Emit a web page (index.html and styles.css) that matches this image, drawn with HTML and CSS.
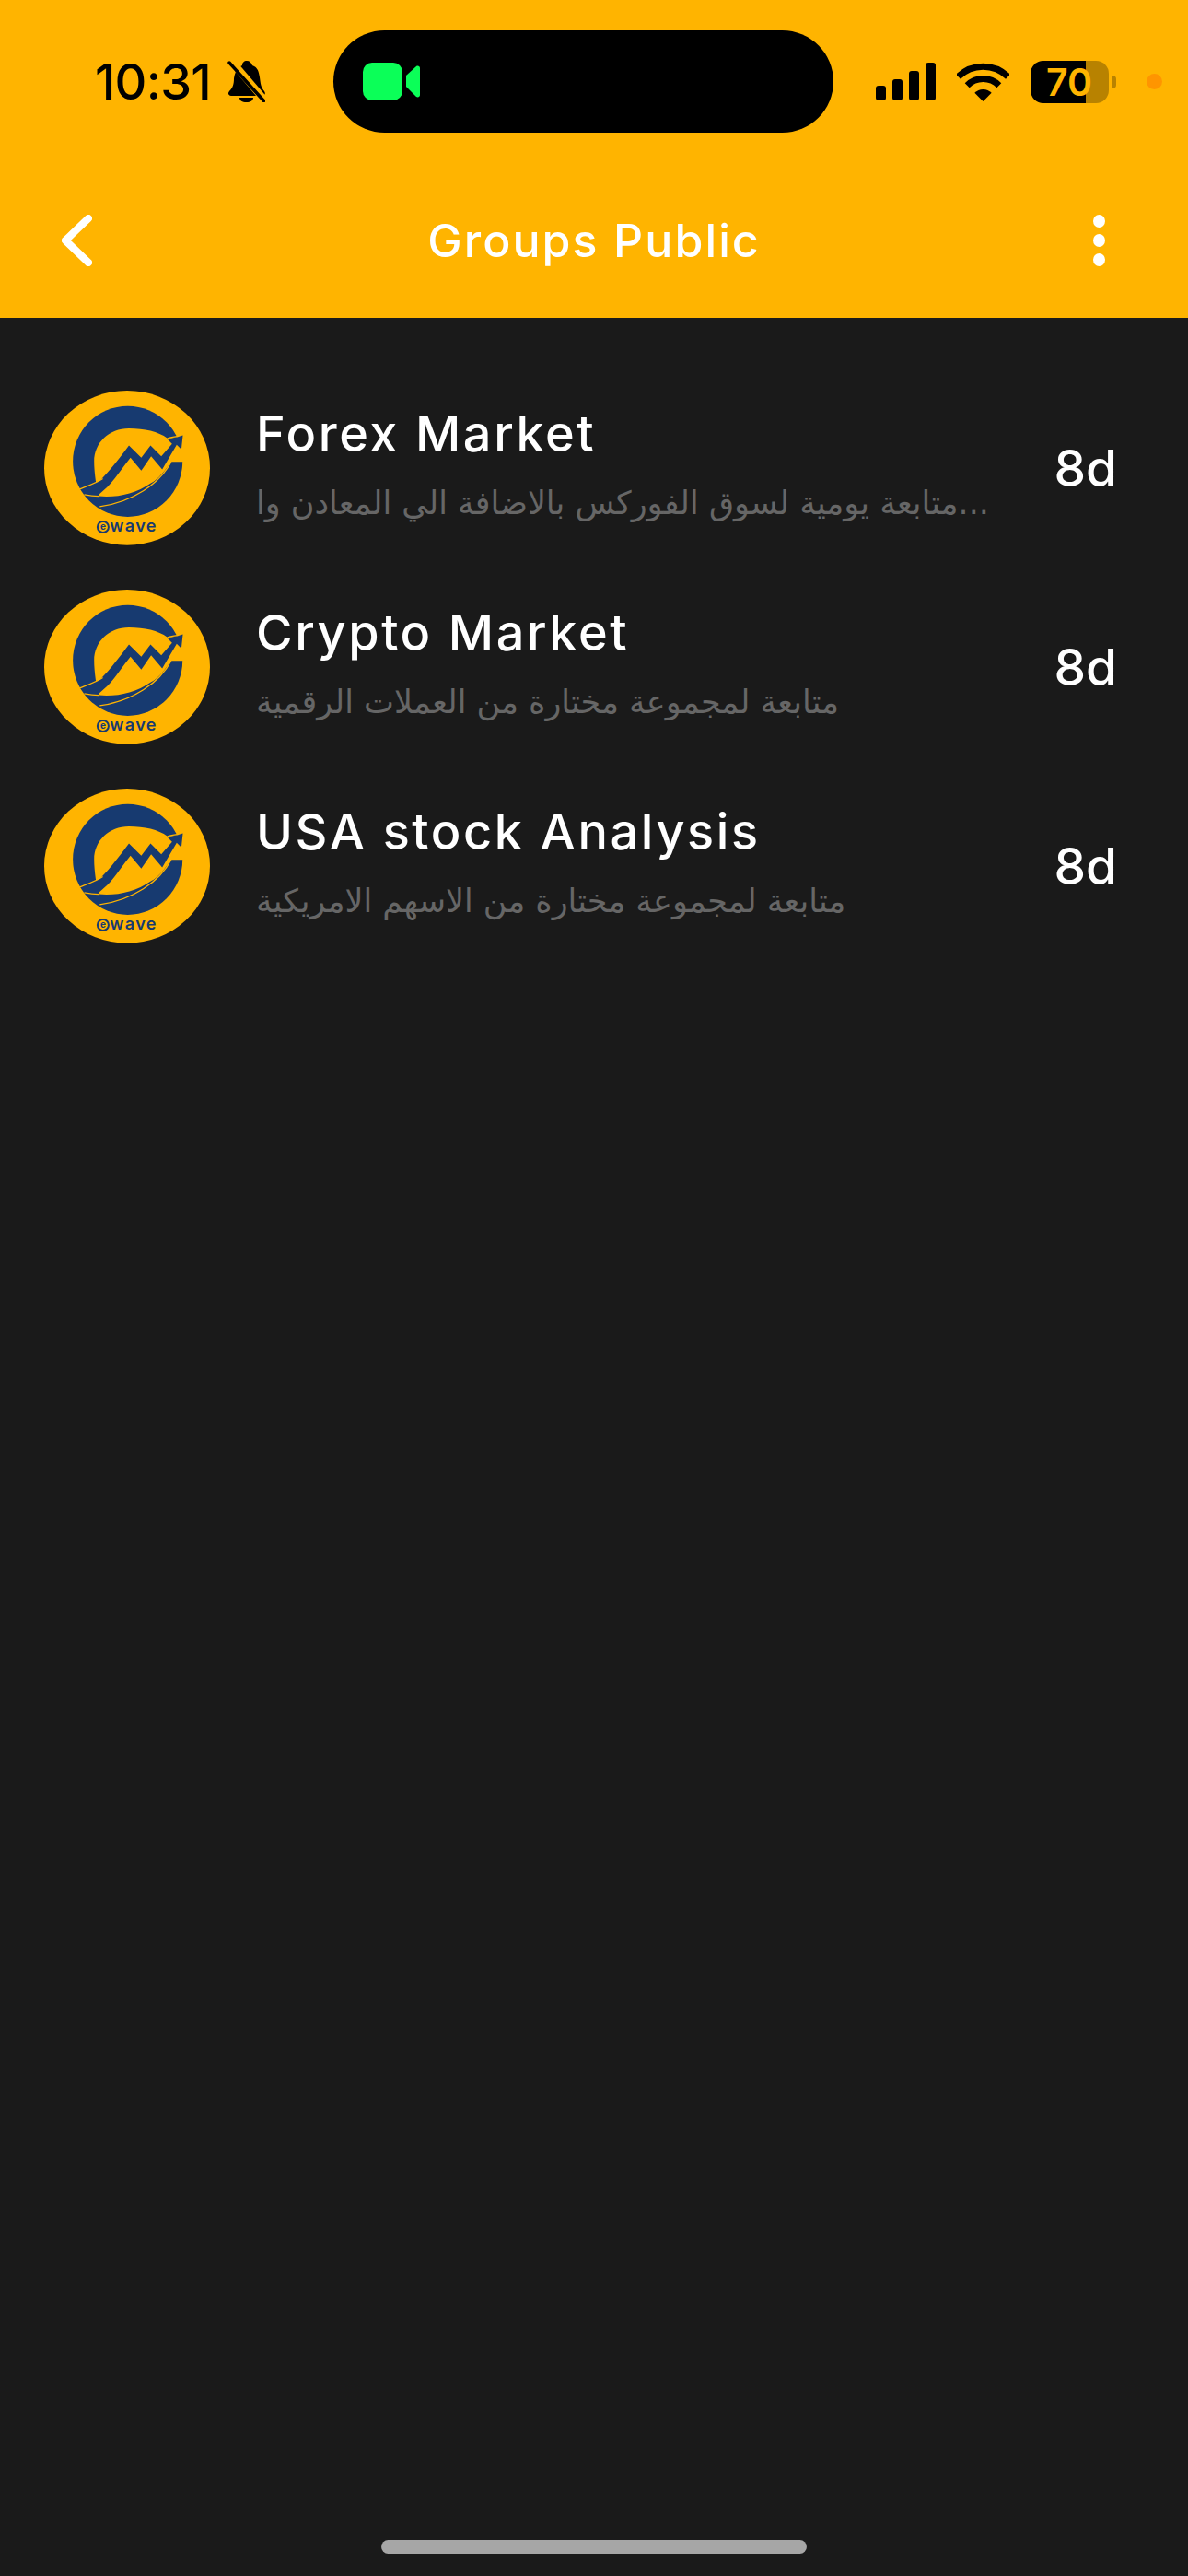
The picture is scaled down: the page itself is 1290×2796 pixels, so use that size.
FILE: index.html
```html
<!DOCTYPE html>
<html>
  <head>
    <meta name="viewport" content="width=device-width, initial-scale=1" />
    <link rel="stylesheet" href="styles.css">
  </head>
  <body>
    <!-- shared logo mark, used by every row -->
    <svg class="defs" width="0" height="0">
      <defs>
        <g id="logo">
          <ellipse cx="324" cy="293" rx="269" ry="251" fill="#ffb400" />
          <ellipse cx="326" cy="272" rx="178" ry="180" fill="#173a70" />
          <!-- hole of the C, opened towards the right -->
          <path fill="#ffb400" d="M217 272C217 212 265 165 330 165 380 165 425 175 455 197L510 190 510 273H467C440 310 425 330 402 342 350 378 290 390 232 385 225 360 217 310 217 272Z" />
          <!-- rising arrow -->
          <path fill="#173a70" d="M172 362C200 350 225 342 240 330 270 300 300 260 330 220L370 260 400 220 435 255 470 215 455 200C470 195 490 192 505 187L500 233 485 218 438 298 402 255 370 302 335 260C310 290 285 330 260 355L230 382C215 382 200 382 190 380Z" />
          <path fill="none" stroke="#ffb400" stroke-width="4" d="M170 362C195 352 225 342 245 328M185 380C200 383 215 385 232 385M235 419C340 405 430 345 467 273M455 197C465 193 480 192 492 190" />
        </g>
      </defs>
    </svg>

    <div class="page">
      <div class="topbar">
        <div class="status">
          <div class="status-left">
            <span class="time">10:31</span>
            <svg class="bell" viewBox="0 0 41 45">
              <path d="M21 0c3 0 5 2 6 5 6 2 7 7 8 13 1 7 1 10 5 15 2 3 0 5-2 5H4c-3 0-4-3-2-5 4-4 5-8 5-14 1-7 4-12 9-14 0-3 2-5 5-5z" />
              <path d="M13 40h15c0 3-3 5-7.500 5S13 43 13 40z" />
              <path class="bell-gap" d="M4 0 44 47" />
              <path class="bell-slash" d="M2 2 39.500 43.500" />
            </svg>
          </div>
          <div class="island">
            <svg class="camera" viewBox="0 0 62 41">
              <rect width="43" height="41" rx="10" />
              <path d="M47 14 58 4c2-1 4 0 4 2v29c0 2-2 3-4 2L47 26z" />
            </svg>
          </div>
          <div class="status-right">
            <div class="signal">
              <span class="bar bar1"></span>
              <span class="bar bar2"></span>
              <span class="bar bar3"></span>
              <span class="bar bar4"></span>
            </div>
            <svg class="wifi" viewBox="0 0 57 42">
              <path d="M1.500 15.200A38.500 38.500 0 0 1 55.500 15.200" />
              <path d="M11.200 24.700A24.500 24.500 0 0 1 45.800 24.700" />
              <path class="wifi-fan" d="M28.500 42 19.300 32.800A13 13 0 0 1 37.700 32.800Z" />
            </svg>
            <div class="battery">
              <div class="battery-body">70</div>
              <div class="battery-cap"></div>
            </div>
            <div class="mic-dot"></div>
          </div>
        </div>

        <div class="nav">
          <svg class="back" viewBox="0 0 33 56">
            <path d="M29 4 4 28 29 52" />
          </svg>
          <div class="nav-title">Groups Public</div>
          <div class="more">
            <span></span>
            <span></span>
            <span></span>
          </div>
        </div>
      </div>

      <div class="list">
        <div class="row">
          <svg class="avatar" viewBox="55 42 538 503" preserveAspectRatio="none">
            <use href="#logo" />
            <circle class="logo-ring" cx="246" cy="485" r="18" />
            <text class="logo-e" x="246" y="495">e</text>
            <text class="logo-text" x="268" y="500">wave</text>
          </svg>
          <div class="info">
            <div class="name">Forex Market</div>
            <div class="desc">متابعة يومية لسوق الفوركس بالاضافة الي المعادن وا...</div>
          </div>
          <div class="age">8d</div>
        </div>
        <div class="row">
          <svg class="avatar" viewBox="55 42 538 503" preserveAspectRatio="none">
            <use href="#logo" />
            <circle class="logo-ring" cx="246" cy="485" r="18" />
            <text class="logo-e" x="246" y="495">e</text>
            <text class="logo-text" x="268" y="500">wave</text>
          </svg>
          <div class="info">
            <div class="name">Crypto Market</div>
            <div class="desc">متابعة لمجموعة مختارة من العملات الرقمية</div>
          </div>
          <div class="age">8d</div>
        </div>
        <div class="row">
          <svg class="avatar" viewBox="55 42 538 503" preserveAspectRatio="none">
            <use href="#logo" />
            <circle class="logo-ring" cx="246" cy="485" r="18" />
            <text class="logo-e" x="246" y="495">e</text>
            <text class="logo-text" x="268" y="500">wave</text>
          </svg>
          <div class="info">
            <div class="name">USA stock Analysis</div>
            <div class="desc">متابعة لمجموعة مختارة من الاسهم الامريكية</div>
          </div>
          <div class="age">8d</div>
        </div>
      </div>

      <div class="home-bar"></div>
    </div>
  </body>
</html>
```

FILE: styles.css
```css
body {
  margin: 0;
  background: #1a1a1a;
  font-family: "Inter", "DejaVu Sans", sans-serif;
}

.defs {
  display: block;
}

.page {
  height: 2796px;
  display: flex;
  flex-direction: column;
  overflow: hidden;
}

.topbar {
  background: #ffb400;
  height: 345px;
}

/* status bar */

.status {
  height: 111px;
  padding-top: 33px;
  display: flex;
  align-items: center;
}

.status-left {
  flex: none;
  width: 362px;
  padding-left: 103px;
  box-sizing: border-box;
  display: flex;
  align-items: center;
  gap: 18px;
}

.time {
  font-size: 54px;
  font-weight: 500;
  letter-spacing: -0.800px;
  line-height: 60px;
  color: #000;
}

.bell {
  width: 41px;
  height: 45px;
  flex: none;
  fill: #000;
}

.bell-gap {
  fill: none;
  stroke: #ffb400;
  stroke-width: 8;
}

.bell-slash {
  fill: none;
  stroke: #000;
  stroke-width: 3.5;
  stroke-linecap: round;
}

.island {
  flex: none;
  width: 543px;
  height: 111px;
  border-radius: 56px;
  background: #000;
  display: flex;
  align-items: center;
  padding-left: 32px;
  box-sizing: border-box;
}

.camera {
  width: 62px;
  height: 41px;
  fill: #0bff58;
}

.status-right {
  display: flex;
  align-items: center;
  margin-left: 46px;
}

.signal {
  display: flex;
  align-items: flex-end;
  gap: 7px;
  height: 41px;
}

.bar {
  width: 11px;
  background: #000;
  border-radius: 3px;
}

.bar1 {
  height: 16px;
}

.bar2 {
  height: 23px;
}

.bar3 {
  height: 32px;
}

.bar4 {
  height: 41px;
}

.wifi {
  width: 57px;
  height: 42px;
  margin-left: 23px;
  fill: none;
  stroke: #000;
  stroke-width: 7;
}

.wifi-fan {
  fill: #000;
  stroke: none;
}

.battery {
  display: flex;
  align-items: center;
  gap: 3px;
  margin-left: 23px;
}

.battery-body {
  width: 85px;
  height: 46px;
  box-sizing: border-box;
  padding-left: 17px;
  border-radius: 14px;
  background: linear-gradient(90deg, #000 60px, #b88200 60px);
  color: #ffb400;
  font-size: 41px;
  font-weight: 600;
  line-height: 46px;
}

.battery-cap {
  width: 5px;
  height: 14px;
  border-radius: 0 4px 4px 0;
  background: #b88200;
}

.mic-dot {
  width: 17px;
  height: 17px;
  border-radius: 50%;
  background: #ff9500;
  margin-left: 33px;
}

/* nav bar */

.nav {
  height: 168px;
  margin-top: 33px;
  padding: 0 67px;
  display: grid;
  grid-template-columns: 1fr auto 1fr;
  align-items: center;
}

.back {
  width: 33px;
  height: 56px;
  fill: none;
  stroke: #fff;
  stroke-width: 8;
  stroke-linecap: round;
  stroke-linejoin: round;
}

.nav-title {
  color: #fff;
  font-size: 50px;
  font-weight: 500;
  letter-spacing: 2.100px;
}

.more {
  justify-self: end;
  margin-right: 23px;
  display: flex;
  flex-direction: column;
  gap: 7px;
}

.more span {
  width: 13px;
  height: 14px;
  border-radius: 50%;
  background: #fff;
}

/* group list */

.list {
  flex: 1;
  padding: 79px 77px 0 48px;
  display: flex;
  flex-direction: column;
  gap: 48px;
}

.row {
  display: flex;
  align-items: center;
  height: 168px;
}

.avatar {
  width: 180px;
  height: 168px;
  flex: none;
}

.logo-ring {
  fill: none;
  stroke: #173a70;
  stroke-width: 6;
}

.logo-e {
  font-size: 30px;
  font-weight: 700;
  fill: #173a70;
  text-anchor: middle;
}

.logo-text {
  font-size: 54px;
  font-weight: 600;
  letter-spacing: 4px;
  fill: #173a70;
}

.info {
  flex: 1;
  min-width: 0;
  margin-left: 50px;
  align-self: flex-start;
  padding-top: 15px;
}

.name {
  color: #fff;
  font-size: 54px;
  font-weight: 500;
  line-height: 64px;
  letter-spacing: 2.600px;
}

.desc {
  color: #666;
  font-family: "DejaVu Sans", sans-serif;
  font-size: 35px;
  line-height: 52px;
  margin-top: 17px;
  white-space: nowrap;
}

.age {
  color: #fff;
  font-size: 55px;
  font-weight: 500;
}

.home-bar {
  flex: none;
  width: 462px;
  height: 15px;
  margin: 0 auto 24px;
  border-radius: 8px;
  background: #a6a6a6;
}
```
